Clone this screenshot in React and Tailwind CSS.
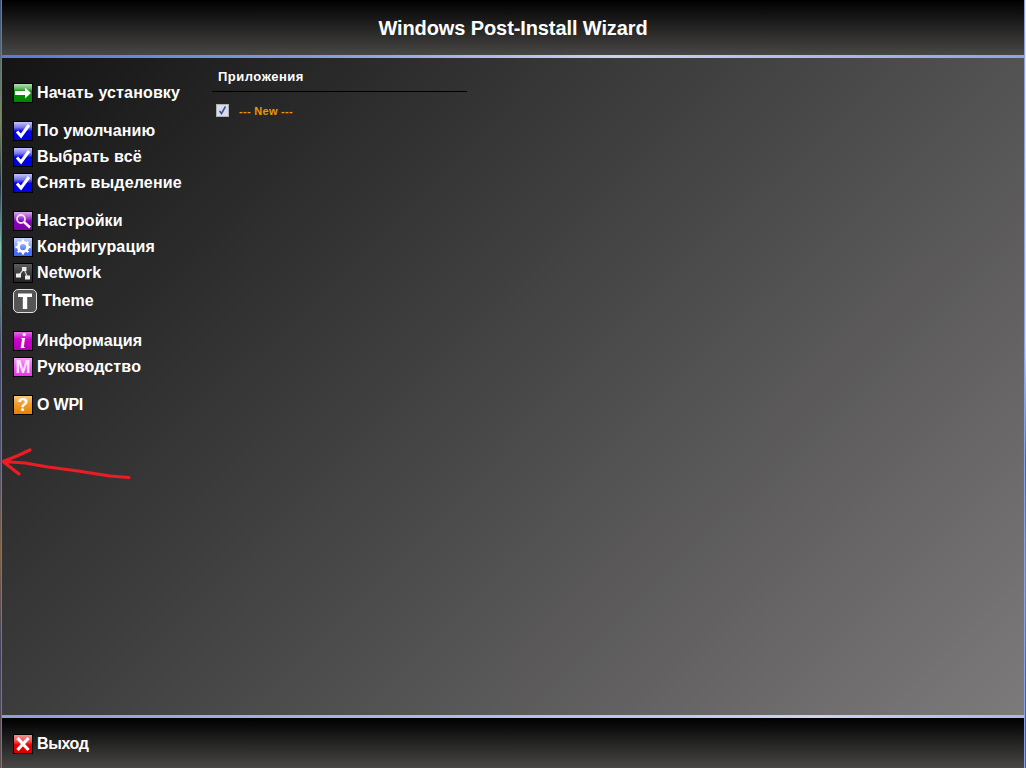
import React from 'react';

const sans = 'font-["Liberation_Sans",Arial,sans-serif]';

function IconBox({ bg, children }) {
  return (
    <span className={`flex h-5 w-5 shrink-0 items-center justify-center overflow-hidden border border-black ${bg}`}>
      {children}
    </span>
  );
}

const ArrowIcon = () => (
  <IconBox bg="bg-[linear-gradient(to_bottom,#b8dcb8_0%,#60b060_28%,#009000_40%,#008800_100%)]">
    <svg width="18" height="18" viewBox="0 0 18 18">
      <path d="M1 7h10V3.5L17 9l-6 5.5V11H1z" fill="#fff" />
    </svg>
  </IconBox>
);

const CheckIcon = () => (
  <IconBox bg="bg-[linear-gradient(to_bottom,#c4c4f8_0%,#7878f0_30%,#0000e8_52%,#0000e0_100%)]">
    <svg width="18" height="18" viewBox="0 0 18 18">
      <path d="M3 9.5l4 4.5 8-11" fill="none" stroke="#fff" strokeWidth="3" />
    </svg>
  </IconBox>
);

const SearchIcon = () => (
  <IconBox bg="bg-[linear-gradient(to_bottom,#d8a8e8_0%,#a850d0_30%,#8800b8_52%,#8000b0_100%)]">
    <svg width="18" height="18" viewBox="0 0 18 18">
      <circle cx="7" cy="7" r="4" fill="none" stroke="#f4e0f8" strokeWidth="1.8" />
      <path d="M10 10l6 5.5" stroke="#fff" strokeWidth="2.4" />
    </svg>
  </IconBox>
);

const GearIcon = () => (
  <IconBox bg="bg-[linear-gradient(to_bottom,#c8d4f8_0%,#90a8f8_40%,#4870f8_70%,#4068f0_100%)]">
    <svg width="18" height="18" viewBox="0 0 18 18">
      <circle cx="9" cy="9" r="4.6" fill="none" stroke="#fff" strokeWidth="3" />
      <path
        d="M9 1.5v3M9 13.5v3M1.5 9h3M13.5 9h3M3.7 3.7l2.1 2.1M12.2 12.2l2.1 2.1M14.3 3.7l-2.1 2.1M5.8 12.2l-2.1 2.1"
        stroke="#fff"
        strokeWidth="2.2"
      />
    </svg>
  </IconBox>
);

const NetworkIcon = () => (
  <IconBox bg="bg-[linear-gradient(to_bottom,#5c5c5c_0%,#3c3c3c_50%,#242424_100%)]">
    <svg width="18" height="18" viewBox="0 0 18 18">
      <path d="M10 5L5 11M10 5l3 7" stroke="#ccc" strokeWidth="1.2" />
      <path d="M8 3h4.5v4H8zM2 9.5h5v4H2zM11 11.5h5v4h-5z" fill="#eee" />
    </svg>
  </IconBox>
);

const LetterIcon = ({ bg, letter, className }) => (
  <IconBox bg={bg}>
    <span className={className}>{letter}</span>
  </IconBox>
);

const CloseIcon = () => (
  <IconBox bg="bg-[linear-gradient(to_bottom,#f49090_0%,#f05050_35%,#e80000_55%,#d80000_100%)]">
    <svg width="18" height="18" viewBox="0 0 18 18">
      <path d="M3.5 3l11 12M14.5 3l-11 12" stroke="#fff" strokeWidth="3.2" />
    </svg>
  </IconBox>
);

const ThemeIcon = () => (
  <span className="flex h-6 w-6 shrink-0 items-center justify-center rounded-[5px] border border-[#e0e0e0] bg-[#555555]">
    <svg width="20" height="20" viewBox="0 0 20 20">
      <path d="M3 2.5h14v3.6h-4.8V18H7.8V6.1H3z" fill="#fff" />
    </svg>
  </span>
);

function MenuItem({ icon, label, tall, gap, spacing = 'tracking-[0.15px]' }) {
  return (
    <div className={`flex items-center text-white font-bold text-base ${spacing} ${tall ? 'h-[30px]' : 'h-[26px]'} ${gap ? 'gap-[5px]' : 'gap-1'}`}>
      {icon}
      <span>{label}</span>
    </div>
  );
}

function RedArrow() {
  return (
    <svg className="absolute left-0 top-[440px]" width="140" height="45" viewBox="0 440 140 45">
      <path
        d="M30 450L17 456 3 461.5 19 474M3 461.5L25 463 48 467 78 471 110 476 129 477.5"
        fill="none"
        stroke="#ed1c24"
        strokeWidth="3.2"
        strokeLinecap="round"
        strokeLinejoin="round"
      />
    </svg>
  );
}

export default function App() {
  return (
    <div className={`relative flex h-[768px] w-[1026px] overflow-hidden ${sans}`}>
      {/* desktop peeking through at the edges */}
      <div className="w-px bg-[linear-gradient(to_bottom,#3a5080_0%,#7a8a60_16%,#203040_24%,#80c0b0_32%,#404868_45%,#505070_60%,#806040_72%,#404060_85%,#605050_100%)]" />
      <div className="w-px bg-[#5a78d0]" />

      <div className="flex min-w-0 flex-1 flex-col">
        <header className="flex h-[55px] items-center justify-center bg-[linear-gradient(to_bottom,#000000,#484746)]">
          <h1 className="text-xl font-bold tracking-[-0.1px] text-white">Windows Post-Install Wizard</h1>
        </header>
        <div className="h-[3px] bg-[linear-gradient(to_right,#5a78d8,#7f9be0_30%,#c8d4f0_60%,#8ca4e4)]" />

        <main className="flex min-h-0 flex-1 bg-[linear-gradient(135deg,#141414,#7c7a7a)]">
          <nav className="flex w-[210px] shrink-0 flex-col gap-3 pl-[11px] pt-[22px]">
            <div>
              <MenuItem icon={<ArrowIcon />} label="Начать установку" />
            </div>
            <div>
              <MenuItem icon={<CheckIcon />} label="По умолчанию" />
              <MenuItem icon={<CheckIcon />} label="Выбрать всё" />
              <MenuItem icon={<CheckIcon />} label="Снять выделение" />
            </div>
            <div>
              <MenuItem icon={<SearchIcon />} label="Настройки" />
              <MenuItem icon={<GearIcon />} label="Конфигурация" />
              <MenuItem icon={<NetworkIcon />} label="Network" />
              <MenuItem icon={<ThemeIcon />} label="Theme" tall gap spacing="tracking-normal" />
            </div>
            <div>
              <MenuItem
                icon={
                  <LetterIcon
                    bg="bg-[linear-gradient(to_bottom,#e070e0_0%,#d000d0_40%,#b000b0_100%)]"
                    letter="i"
                    className={'font-["Liberation_Serif",serif] text-xl italic leading-none text-white'}
                  />
                }
                label="Информация"
              />
              <MenuItem
                icon={
                  <LetterIcon
                    bg="bg-[linear-gradient(to_bottom,#f8a0f8_0%,#f060f0_45%,#f030f0_100%)]"
                    letter="M"
                    className="text-lg leading-none text-[#ffe4ff]"
                  />
                }
                label="Руководство"
              />
            </div>
            <div>
              <MenuItem
                icon={
                  <LetterIcon
                    bg="bg-[linear-gradient(to_bottom,#f8c878_0%,#f0a030_40%,#e88000_100%)]"
                    letter="?"
                    className="text-lg leading-none text-white"
                  />
                }
                label="О WPI"
                spacing="tracking-[-0.2px]"
              />
            </div>
          </nav>

          <section className="w-[255px] shrink-0">
            <div className="flex h-[34px] items-center border-b border-black pl-[6px] pt-[5px] text-[13px] font-bold tracking-[0.5px] text-white">
              Приложения
            </div>
            <div className="ml-1 mt-[10px] flex items-center gap-[10px]">
              <span className="flex h-[13px] w-[13px] items-center justify-center border border-[#b0b0b0] bg-[#d8dcea]">
                <svg width="11" height="11" viewBox="0 0 11 11">
                  <path d="M2.5 6l2 2.5L8.5 1.5" fill="none" stroke="#3f50a0" strokeWidth="1.6" />
                </svg>
              </span>
              <span className="pt-px text-[11px] font-bold tracking-[0.3px] text-[#e69a00]">--- New ---</span>
            </div>
          </section>
        </main>

        <div className="h-[3px] bg-[linear-gradient(to_right,#8b9fd8,#b0c0ec_50%,#c8d4f0_80%,#a8b8e8)]" />
        <footer className="flex h-[50px] items-center bg-[linear-gradient(to_bottom,#000000,#484746)] pl-[11px] pt-[2px]">
          <MenuItem icon={<CloseIcon />} label="Выход" spacing="tracking-[-0.4px]" />
        </footer>
      </div>

      <div className="w-px bg-[#8ca4e4]" />
      <div className="w-px bg-[linear-gradient(to_bottom,#e8e8e8_0%,#d8d8d8_45%,#506080_60%,#908060_75%,#585880_90%,#606060_100%)]" />

      <RedArrow />
    </div>
  );
}
